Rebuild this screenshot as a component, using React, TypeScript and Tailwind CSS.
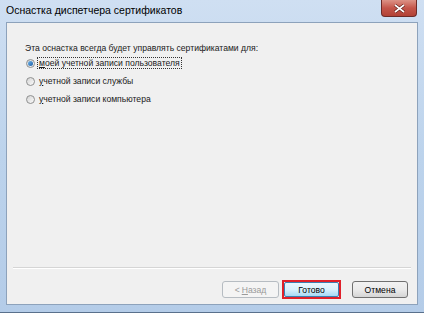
import { useState } from "react"

const font = { fontFamily: '"Liberation Sans", Arial, sans-serif' }

function Radio({ checked }: { checked?: boolean }) {
  return (
    <span className="relative flex h-[9px] w-[9px] shrink-0 items-center justify-center rounded-full border border-[#8e8f8f] bg-gradient-to-br from-[#d4d4d4] to-[#fbfbfb]">
      {checked && (
        <span className="h-[5px] w-[5px] rounded-full bg-gradient-to-br from-[#6fb6ea] to-[#1b5da6]" />
      )}
    </span>
  )
}

export default function App() {
  const [choice, setChoice] = useState(0)
  const options = [
    "моей учетной записи пользователя",
    "учетной записи службы",
    "учетной записи компьютера",
  ]

  return (
    <div
      className="flex h-[313px] w-[424px] flex-col bg-gradient-to-b from-[#cfdff2] via-[#bcd3ec] to-[#b4cce8] border-b border-[#59708c]"
      style={font}
    >
      {/* Title bar */}
      <div className="relative flex h-[22px] shrink-0 items-center pl-[6px] pr-[7px]">
        <span className="text-[10.5px] text-black">Оснастка диспетчера сертификатов</span>
        <div className="ml-auto flex h-[17px] w-[36px] self-start items-center justify-center rounded-b-[4px] border border-t-0 border-[#6d2b27] bg-gradient-to-b from-[#dc9286] via-[#c4554a] to-[#b24236]">
          <svg width="11" height="9" viewBox="0 0 11 9">
            <path d="M1 1 L10 8 M10 1 L1 8" stroke="#5a1a14" strokeWidth="3" />
            <path d="M1 1 L10 8 M10 1 L1 8" stroke="#ffffff" strokeWidth="1.6" />
          </svg>
        </div>
      </div>

      {/* Client area */}
      <div className="mx-[6px] mb-[7px] flex flex-1 flex-col border border-[#8da2bb] bg-[#f0f0f0] text-[8.6px] leading-[12px] text-[#1a1a1a]">
        <div className="flex flex-col pl-[18px] pt-[19px]">
          <div className="mb-[3px]">Эта оснастка всегда будет управлять сертификатами для:</div>
          <div className="flex flex-col gap-[6px]">
            {options.map((label, i) => (
              <div
                key={label}
                className="flex h-[12px] items-center gap-[2px] pl-[1px]"
                onClick={() => setChoice(i)}
              >
                <Radio checked={choice === i} />
                <span
                  className={
                    i === 0
                      ? "border border-dotted border-[#333] px-[1px] leading-[10px]"
                      : "border border-transparent px-[1px] leading-[10px]"
                  }
                >
                  <span className="underline underline-offset-1">{label[0]}</span>
                  {label.slice(1)}
                </span>
              </div>
            ))}
          </div>
        </div>

        <div className="flex-1" />

        <div className="mx-[6px] border-t border-[#d5d5d5] border-b border-b-white" />

        <div className="flex items-center justify-end gap-[3px] px-[9px] pb-[5px] pt-[11px]">
          <button className="flex h-[17px] w-[57px] items-center justify-center rounded-[3px] border border-[#b6bcc2] bg-[#f4f4f4] text-[8.6px] text-[#9a9a9a]">
            &lt; <span className="ml-[2px] underline">Н</span>азад
          </button>
          <div className="border-2 border-[#e0202a] p-0">
            <button className="flex h-[15px] w-[55px] items-center justify-center rounded-[2px] border border-[#3c7fb1] bg-gradient-to-b from-[#eaf6fd] via-[#d9f0fc] to-[#a7d9f5] text-[8.6px] text-black">
              Готово
            </button>
          </div>
          <button className="ml-[8px] flex h-[17px] w-[56px] items-center justify-center rounded-[3px] border border-[#707070] bg-gradient-to-b from-[#f2f2f2] via-[#ebebeb] to-[#d5d5d5] text-[8.6px] text-black">
            Отмена
          </button>
        </div>
      </div>
    </div>
  )
}
